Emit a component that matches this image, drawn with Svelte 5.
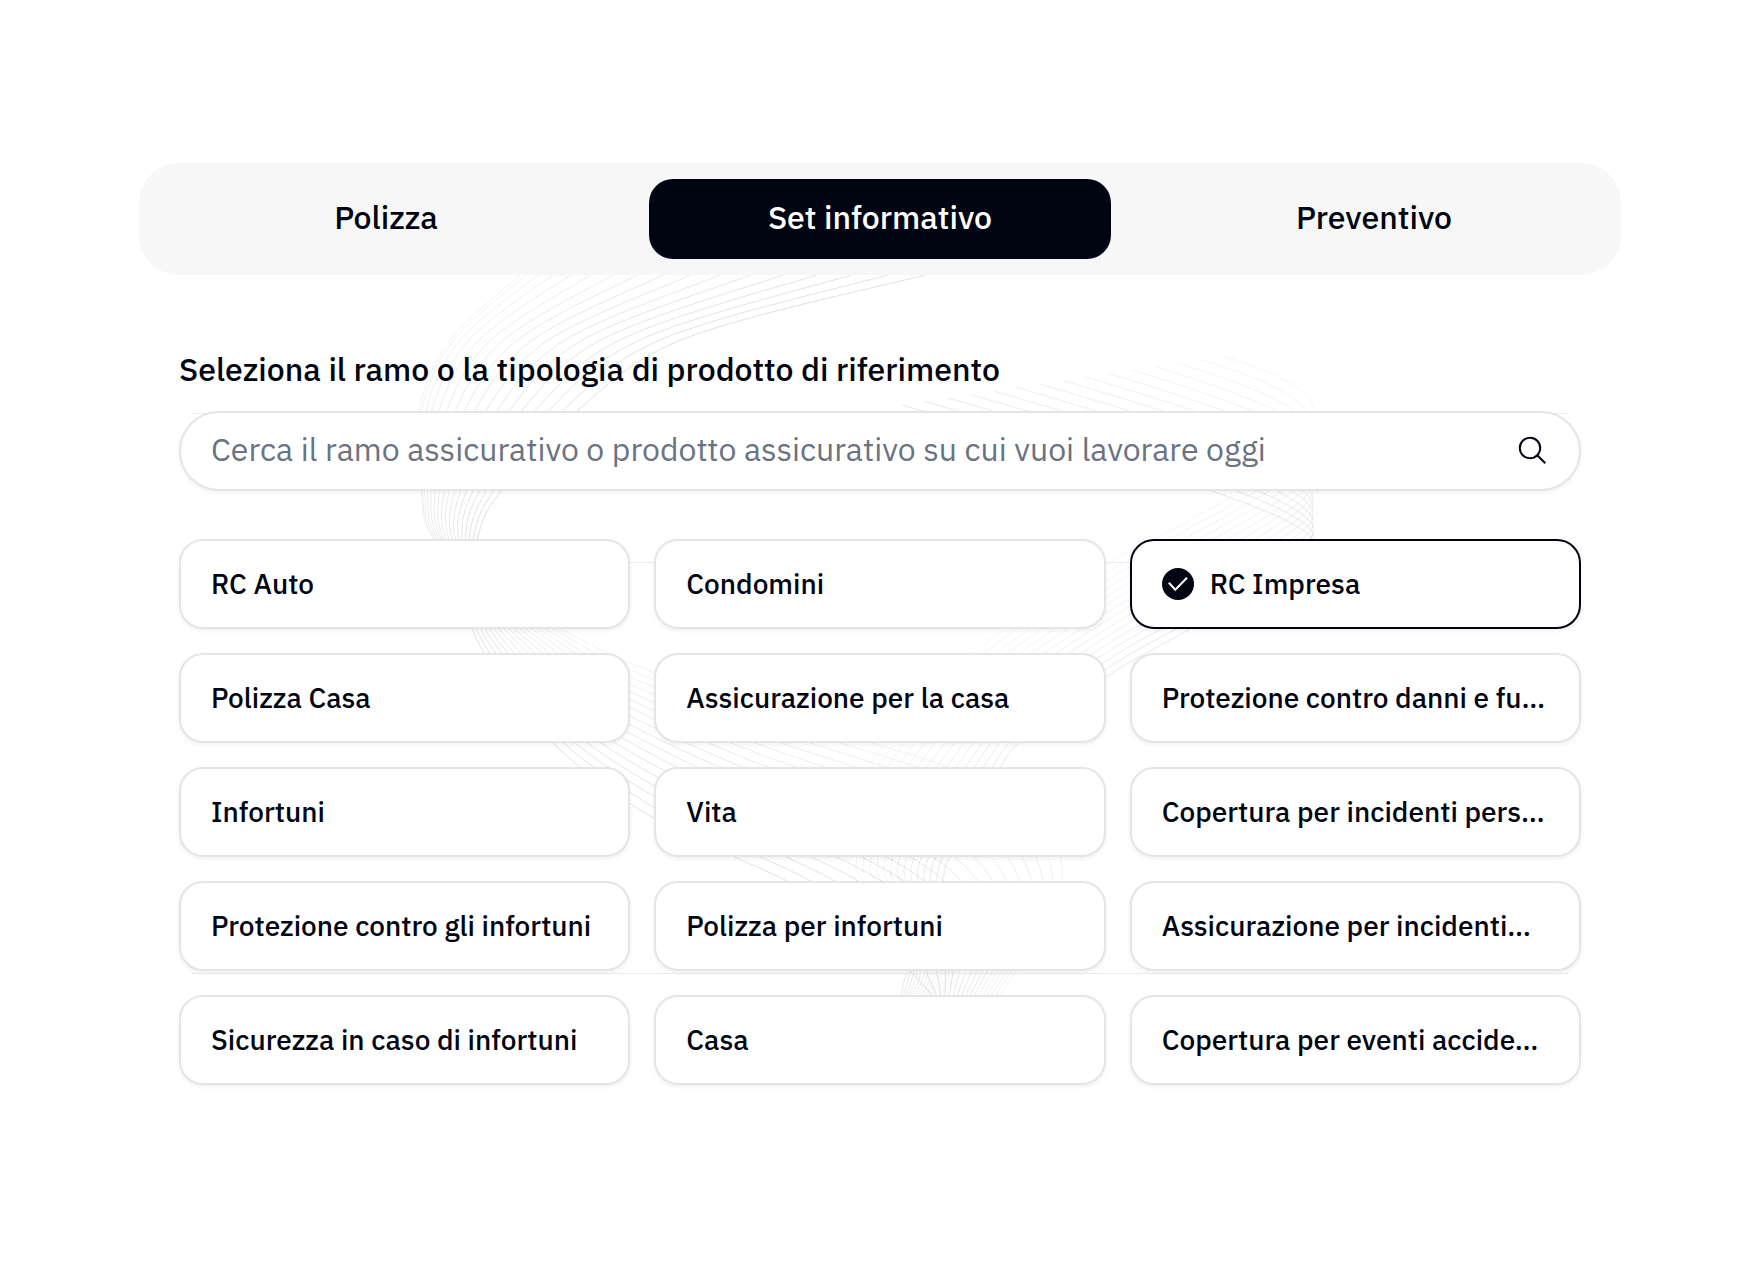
<script>
  const tabs = ['Polizza', 'Set informativo', 'Preventivo'];
  const products = [
    'RC Auto', 'Condomini', 'RC Impresa',
    'Polizza Casa', 'Assicurazione per la casa', 'Protezione contro danni e fu…',
    'Infortuni', 'Vita', 'Copertura per incidenti pers…',
    'Protezione contro gli infortuni', 'Polizza per infortuni', 'Assicurazione per incidenti…',
    'Sicurezza in caso di infortuni', 'Casa', 'Copertura per eventi accide…'
  ];

  let activeTab = $state('Set informativo');
  let selected = $state('RC Impresa');

  // Each ribbon is a bundle of curves blended between two edge curves.
  // The first `spread` points open up progressively towards the inner edge.
  const ribbons = [
    {
      count: 17,
      spread: 5,
      from: [[520, 275], [450, 340], [419, 411], [421, 491], [434, 539], [500, 602], [560, 629], [640, 667], [790, 718], [947, 767], [1035, 810], [1062, 870], [1045, 925], [1000, 995]],
      to: [[925, 275], [686, 338], [577, 411], [501, 491], [477, 539], [468, 600], [484, 653], [553, 743], [655, 819], [787, 881], [860, 925], [910, 971], [922, 984], [932, 995]],
      fade: [0.06, 0.13]
    },
    {
      count: 15,
      spread: 0,
      from: [[1224, 356], [1275, 375], [1310, 400], [1313, 440], [1270, 475], [1155, 539], [1106, 565], [974, 653], [868, 767], [850, 857], [857, 881], [905, 925], [955, 971], [940, 995]],
      to: [[902, 405], [1060, 450], [1212, 491], [1312, 539], [1270, 585], [1190, 629], [1106, 677], [1018, 743], [985, 800], [950, 857], [942, 881], [925, 925], [907, 971], [901, 995]],
      fade: [0.04, 0.1]
    }
  ];

  function smooth(points) {
    let d = `M${points[0][0]} ${points[0][1]}`;
    for (let i = 0; i < points.length - 1; i++) {
      const a = points[Math.max(i - 1, 0)];
      const b = points[i];
      const c = points[i + 1];
      const e = points[Math.min(i + 2, points.length - 1)];
      const h1 = [b[0] + (c[0] - a[0]) / 6, b[1] + (c[1] - a[1]) / 6];
      const h2 = [c[0] - (e[0] - b[0]) / 6, c[1] - (e[1] - b[1]) / 6];
      d += `C${[...h1, ...h2, ...c].map((n) => n.toFixed(1)).join(' ')}`;
    }
    return d;
  }

  const strands = ribbons.flatMap(({ count, spread, from, to, fade }) =>
    Array.from({ length: count }, (_, i) => {
      const t = i / (count - 1);
      const points = from.map((p, k) => {
        const w = k < spread ? t ** 1.5 : t;
        return [p[0] + (to[k][0] - p[0]) * w, p[1] + (to[k][1] - p[1]) * w];
      });
      return { d: smooth(points), opacity: fade[0] + (fade[1] - fade[0]) * t };
    })
  );
</script>

<main>
  <svg class="art" viewBox="0 0 1760 1288" aria-hidden="true">
    <g fill="none" stroke="#0f1a24">
      {#each strands as s}
        <path d={s.d} stroke-opacity={s.opacity} />
      {/each}
    </g>
    <path d="M191 413.500H1569M630 562.500H1130M191 973.500H1569" stroke="#ececed" />
  </svg>

  <nav class="tabs" aria-label="Documenti">
    {#each tabs as tab}
      <button type="button" class:active={tab === activeTab} aria-pressed={tab === activeTab} onclick={() => (activeTab = tab)}>{tab}</button>
    {/each}
  </nav>

  <section class="panel">
    <label for="search">Seleziona il ramo o la tipologia di prodotto di riferimento</label>
    <div class="search">
      <input id="search" type="text" placeholder="Cerca il ramo assicurativo o prodotto assicurativo su cui vuoi lavorare oggi" />
      <svg viewBox="0 0 32 32" aria-hidden="true">
        <circle cx="13" cy="13" r="10.200" />
        <path d="M20.300 20.300L28.300 28.300" />
      </svg>
    </div>

    <div class="grid">
      {#each products as product}
        <button type="button" class="card" class:selected={product === selected} aria-pressed={product === selected} onclick={() => (selected = product)}>
          {#if product === selected}
            <svg viewBox="0 0 32 32" aria-hidden="true">
              <circle cx="16" cy="16" r="16" />
              <path d="M6.800 14.700L13.300 21.700L25 9.700" />
            </svg>
          {/if}
          <span>{product}</span>
        </button>
      {/each}
    </div>
  </section>
</main>

<style>
  :global(body) {
    background: #fff;
  }

  main {
    position: relative;
    box-sizing: border-box;
    padding: 163px 139px;
    overflow: hidden;
    color: #000511;
    font-family: 'IBM Plex Sans', Roboto, 'Noto Sans', sans-serif;
  }

  .art {
    position: absolute;
    top: 0;
    left: 0;
    width: 100%;
  }

  .tabs {
    position: relative;
    display: grid;
    grid-template-columns: repeat(3, 1fr);
    gap: 32px;
    padding: 16px;
    border-radius: 40px;
    background: #f7f7f7;
  }

  button,
  input {
    margin: 0;
    color: inherit;
    font-family: inherit;
  }

  .tabs button {
    height: 80px;
    padding: 0 0 4px;
    border: 0;
    border-radius: 24px;
    background: none;
    font-size: 32px;
    font-weight: 500;
    line-height: 40px;
    cursor: pointer;
  }

  .tabs .active {
    background: #000511;
    color: #fff;
  }

  .panel {
    position: relative;
    padding: 72px 40px 0;
  }

  label {
    display: block;
    margin-bottom: 20px;
    font-size: 32px;
    font-weight: 500;
    line-height: 44px;
  }

  .search {
    display: flex;
    align-items: center;
    gap: 16px;
    box-sizing: border-box;
    height: 80px;
    margin-bottom: 48px;
    padding: 0 30px;
    border: 2px solid #e4e4e9;
    border-radius: 40px;
    background: #fff;
    box-shadow: 0 2px 4px rgb(0 0 0 / 6%);
  }

  .search input {
    flex: 1;
    min-width: 0;
    padding: 0 0 4px;
    border: 0;
    outline: 0;
    background: none;
    font-size: 32px;
    line-height: 48px;
  }

  .search input::placeholder {
    color: #6b7280;
    opacity: 1;
  }

  .search svg {
    width: 32px;
    height: 32px;
    fill: none;
    stroke: #000511;
    stroke-width: 2;
  }

  .grid {
    display: grid;
    grid-template-columns: repeat(3, minmax(0, 1fr));
    gap: 24px;
  }

  .card {
    display: flex;
    align-items: center;
    gap: 16px;
    box-sizing: border-box;
    height: 90px;
    padding: 0 30px;
    border: 2px solid #e4e4e9;
    border-radius: 24px;
    background: #fff;
    box-shadow: 0 2px 4px rgb(0 0 0 / 6%);
    font-size: 28px;
    font-weight: 500;
    line-height: 40px;
    text-align: left;
    cursor: pointer;
  }

  .card.selected {
    border-color: #000511;
  }

  .card span {
    overflow: hidden;
    text-overflow: ellipsis;
    white-space: nowrap;
  }

  .card svg {
    flex: none;
    width: 32px;
    height: 32px;
    fill: #000511;
  }

  .card path {
    fill: none;
    stroke: #fff;
    stroke-width: 2;
  }
</style>
